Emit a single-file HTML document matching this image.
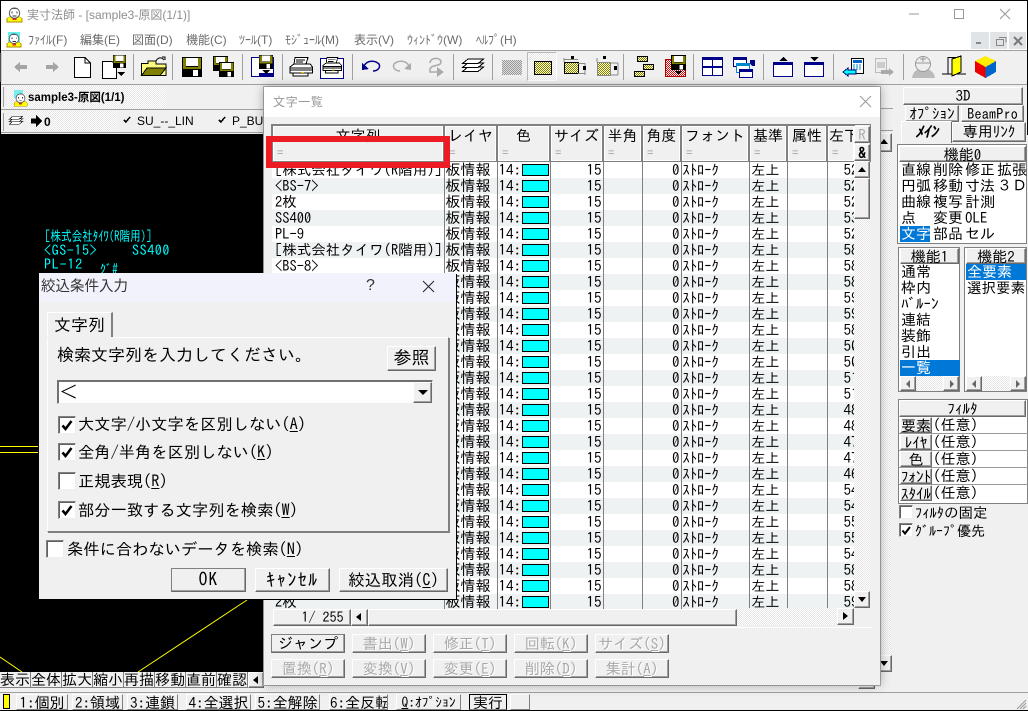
<!DOCTYPE html>
<html lang="ja"><head><meta charset="utf-8"><title>実寸法師</title>
<style>
html,body{margin:0;padding:0;background:#f0f0f0}
body{width:1028px;height:711px;position:relative;overflow:hidden;font-family:"IPAGothic","Noto Sans CJK JP",monospace;font-size:15px;color:#000}
div,span.a,svg{position:absolute}
.t{white-space:pre;line-height:16px;height:16px}
.u{font-family:"Liberation Sans","Noto Sans CJK JP",sans-serif}
.m{font-family:"Liberation Sans","Noto Sans CJK JP",sans-serif;font-size:12px;color:#6a6a6a;top:32px;height:16px;line-height:16px;white-space:pre}
.b{box-sizing:border-box;background:#f0f0f0;border:1px solid;border-color:#fff #6a6a6a #6a6a6a #fff;box-shadow:inset -1px -1px 0 #a0a0a0;text-align:center;white-space:pre}
.d{background:repeating-conic-gradient(#fff 0 25%,#e6e6e6 0 50%) 0 0/2px 2px}
.dis{color:#a8a8a8;text-shadow:1px 1px 0 #fff}
.h{box-sizing:border-box;background:#f0f0f0;border:1px solid #fff;box-shadow:0 0 0 1px #808080;text-align:center;white-space:pre;line-height:18px;height:35px;top:126px;overflow:hidden}
.h i{position:absolute;left:3px;top:20px;font:normal 11px/12px "Liberation Sans",sans-serif;color:#999}
table{position:absolute;left:272px;top:162px;border-collapse:collapse;table-layout:fixed;width:582px;background:#fff;font-size:15px}
td{height:16px;padding:0;line-height:16px;border-right:1px solid #808080;white-space:pre;overflow:hidden;box-sizing:border-box}
tr:nth-child(even){background:#eef2f2}
td:nth-child(1){padding-left:3px;font-size:14.5px}
td:nth-child(2){padding-left:1px}
td:nth-child(3){padding-left:1px}
td:nth-child(4),td:nth-child(6){text-align:right;padding-right:1px}
td:nth-child(7){font-size:14.5px;padding-left:1px}
td:nth-child(8){padding-left:2px;font-size:14px}
td:nth-child(10){padding-left:16px;border:0}
td b{display:inline-block;width:25px;height:10px;background:#0ff;border:1px solid #000;vertical-align:-1px;margin-left:1px}
.cb{box-sizing:border-box;width:18px;height:18px;background:#fff;border:1px solid;border-color:#808080 #eee #eee #808080;box-shadow:inset 1px 1px 0 #606060}
.tri{width:0;height:0}
.hl{background:#0078d7;color:#fff}
.sb{box-sizing:border-box;top:694px;height:16px;background:#f0f0f0;border:1px solid;border-color:#fff #808080 #808080 #fff;line-height:15px;text-align:center;font-size:15px;white-space:pre;overflow:hidden}
.k{box-sizing:border-box;top:672px;height:16px;width:31px;background:#f0f0f0;border-right:1px solid #808080;border-bottom:1px solid #808080;font-size:15px;line-height:15px;text-align:center;overflow:hidden}
.f{left:900px;width:32px;height:16px;font-size:15px;line-height:15px;overflow:hidden}
.cy{color:#0ff;transform-origin:0 0}
</style></head><body>

<!-- title bar -->
<div style="left:0;top:0;width:1028px;height:51px;background:#fff"></div>
<div class="t u" style="left:27px;top:7px;font-size:12px;color:#8e8e8e">実寸法師 - [sample3-原図(1/1)]</div>

<div class="m" style="left:28px">ﾌｧｲﾙ(F)</div>
<div class="m" style="left:80px">編集(E)</div>
<div class="m" style="left:132px">図面(D)</div>
<div class="m" style="left:186px">機能(C)</div>
<div class="m" style="left:239px">ﾂｰﾙ(T)</div>
<div class="m" style="left:285px">ﾓｼﾞｭｰﾙ(M)</div>
<div class="m" style="left:354px">表示(V)</div>
<div class="m" style="left:407px">ｳｨﾝﾄﾞｳ(W)</div>
<div class="m" style="left:476px">ﾍﾙﾌﾟ(H)</div>

<div style="left:971px;top:32px;width:18px;height:17px;background:#e1e4e7"></div>
<div style="left:990px;top:32px;width:17px;height:17px;background:#e1e4e7"></div>
<div style="left:1009px;top:32px;width:17px;height:17px;background:#e1e4e7"></div>

<!-- toolbar bg -->
<div style="left:0;top:50px;width:1028px;height:1px;background:#a0a0a0"></div>
<div style="left:0;top:84px;width:1028px;height:1px;background:#a0a0a0"></div>
<div style="left:527px;top:52px;width:30px;height:29px;box-sizing:border-box;border:1px solid #c8c8c8;border-color:#b8b8b8 #fff #fff #b8b8b8" class="d"></div>

<!-- tabs -->
<div style="left:0;top:85px;width:893px;height:25px;background:#f0f0f0"></div>
<div style="left:3px;top:87px;width:1px;height:20px;background:#a0a0a0"></div>
<div class="d" style="left:7px;top:86px;width:159px;height:23px"></div>
<div class="t u" style="left:28px;top:90px;font-size:11.500px;font-weight:bold">sample3-原図(1/1)</div>
<div style="left:0;top:109px;width:893px;height:1px;background:#a0a0a0"></div>
<div style="left:3px;top:113px;width:1px;height:18px;background:#a0a0a0"></div>
<div class="d" style="left:27px;top:111px;width:90px;height:20px"></div>
<div class="t u" style="left:44px;top:114px;font-size:12px;font-weight:bold">0</div>
<div class="t u" style="left:137px;top:113px;font-size:12px">SU_--_LIN</div>
<div class="t u" style="left:232px;top:113px;font-size:12px">P_BUZZ</div>
<div style="left:0;top:132px;width:893px;height:1px;background:#a0a0a0"></div>

<!-- canvas -->
<div style="left:0;top:134px;width:881px;height:538px;background:#000"></div>
<svg style="left:0;top:134px" width="265" height="540" shape-rendering="crispEdges">
<path d="M0 312.500H38M0 318.500H38" stroke="#ff0" fill="none"/>
<path d="M138 538L247 466M0 523L22 538" stroke="#ff0" fill="none" shape-rendering="auto"/>
</svg>
<div class="t cy" style="left:45px;top:228px;font-size:14px;transform:scaleX(.76)">[株式会社ﾀｲﾜ(R階用)]</div>
<div class="t cy" style="left:44px;top:242px;font-size:14px;letter-spacing:.6px">&lt;GS-15&gt;</div>
<div class="t cy" style="left:132px;top:242px;font-size:14px;letter-spacing:.6px">SS400</div>
<div class="t cy" style="left:44px;top:256px;font-size:14px;letter-spacing:.8px">PL-12</div>
<div class="t cy" style="left:100px;top:261px;font-size:12px">ｸﾞ#</div>

<!-- canvas scrollbar right -->
<div style="left:872px;top:85px;width:21px;height:607px;background:#f0f0f0"></div>
<div style="left:872px;top:108px;width:21px;height:1px;background:#a0a0a0"></div>
<div style="left:872px;top:130px;width:21px;height:1px;background:#a0a0a0"></div>
<div class="d" style="left:872px;top:152px;width:19px;height:520px"></div>
<div class="b" style="left:874px;top:133px;width:18px;height:19px"></div>
<div class="tri" style="left:880px;top:139px;border:4px solid transparent;border-top:0;border-bottom:5px solid #000"></div>
<div class="b" style="left:874px;top:655px;width:18px;height:17px"></div>
<div class="tri" style="left:880px;top:661px;border:4px solid transparent;border-bottom:0;border-top:5px solid #000"></div>
<div style="left:264px;top:672px;width:616px;height:17px" class="d"></div>
<div class="b" style="left:858px;top:672px;width:17px;height:17px"></div>

<!-- command strip -->
<div style="left:0;top:672px;width:265px;height:17px;background:#f0f0f0"></div>
<div class="k" style="left:0">表示</div><div class="k" style="left:31px">全体</div><div class="k" style="left:62px">拡大</div><div class="k" style="left:93px">縮小</div><div class="k" style="left:124px">再描</div><div class="k" style="left:155px">移動</div><div class="k" style="left:186px">直前</div><div class="k" style="left:217px">確認</div>
<div class="b" style="left:248px;top:672px;width:16px;height:16px"></div>
<div class="tri" style="left:253px;top:676px;border:4px solid transparent;border-left:0;border-right:5px solid #000"></div>

<!-- status -->
<div style="left:0;top:689px;width:1028px;height:22px;background:#f0f0f0"></div>
<div style="left:0;top:692px;width:1028px;height:1px;background:#a0a0a0"></div>
<div style="left:3px;top:694px;width:7px;height:15px;background:#ff0;border:1px solid #000;box-sizing:border-box"></div>
<div class="sb d" style="left:16px;width:52px"><u>1</u>:個別</div>
<div class="sb" style="left:72px;width:51px"><u>2</u>:領域</div>
<div class="sb" style="left:127px;width:51px"><u>3</u>:連鎖</div>
<div class="sb" style="left:186px;width:65px"><u>4</u>:全選択</div>
<div class="sb" style="left:255px;width:65px"><u>5</u>:全解除</div>
<div class="sb" style="left:329px;width:59px"><u>6</u>:全反転</div>
<div class="sb" style="left:396px;width:65px;font-size:13.500px"><u>Q</u>:ｵﾌﾟｼｮﾝ</div>
<div class="sb" style="left:469px;width:38px;border-color:#000 #000 #808080 #000">実行</div>
<div class="sb" style="left:510px;width:20px"></div>
<div style="left:0;top:710px;width:1028px;height:1px;background:#000"></div>

<!-- right panel -->
<div style="left:893px;top:85px;width:135px;height:607px;background:#f0f0f0"></div>
<div class="b" style="left:903px;top:87px;width:120px;height:18px;line-height:15px;font-size:15px">3D</div>
<div class="b" style="left:905px;top:105px;width:54px;height:17px;line-height:15px;font-size:15px">ｵﾌﾟｼｮﾝ</div>
<div class="b" style="left:961px;top:105px;width:63px;height:17px;line-height:15px;font-size:14.500px">BeamPro</div>
<div class="b" style="left:952px;top:122px;width:74px;height:20px;line-height:17px;font-size:15px">専用ﾘﾝｸ</div>
<div class="b" style="left:901px;top:121px;width:51px;height:22px;line-height:19px;font-size:15px;font-weight:bold;font-style:italic;border-bottom:0;box-shadow:none">ﾒｲﾝ</div>

<div style="left:898px;top:145px;width:128px;height:98px;background:#fff;box-shadow:0 0 0 1px #808080"></div>
<div class="b" style="left:899px;top:146px;width:127px;height:16px;line-height:15px;font-size:15px">機能0</div>
<div class="hl" style="left:900px;top:226px;width:30px;height:16px"></div>
<div class="t" style="left:901px;top:162px">直線</div><div class="t" style="left:933px;top:162px">削除</div><div class="t" style="left:965px;top:162px">修正</div><div class="t" style="left:997px;top:162px">拡張</div>
<div class="t" style="left:901px;top:178px">円弧</div><div class="t" style="left:933px;top:178px">移動</div><div class="t" style="left:965px;top:178px">寸法</div><div class="t" style="left:997px;top:178px">３Ｄ</div>
<div class="t" style="left:901px;top:194px">曲線</div><div class="t" style="left:933px;top:194px">複写</div><div class="t" style="left:965px;top:194px">計測</div>
<div class="t" style="left:901px;top:210px">点</div><div class="t" style="left:933px;top:210px">変更</div><div class="t" style="left:965px;top:210px">OLE</div>
<div class="t" style="left:901px;top:226px;color:#fff">文字</div><div class="t" style="left:933px;top:226px">部品</div><div class="t" style="left:965px;top:226px">セル</div>

<div style="left:899px;top:248px;width:60px;height:143px;background:#fff;box-shadow:0 0 0 1px #808080"></div>
<div class="b" style="left:900px;top:248px;width:59px;height:16px;line-height:15px;font-size:15px">機能1</div>
<div class="t" style="left:901px;top:264px">通常</div>
<div class="t" style="left:901px;top:280px">枠内</div>
<div class="t" style="left:901px;top:296px;font-size:15px">ﾊﾞﾙｰﾝ</div>
<div class="t" style="left:901px;top:312px">連結</div>
<div class="t" style="left:901px;top:328px">装飾</div>
<div class="t" style="left:901px;top:344px">引出</div>
<div class="hl" style="left:900px;top:360px;width:60px;height:16px"></div>
<div class="t" style="left:901px;top:360px;color:#fff">一覧</div>
<div class="d" style="left:900px;top:376px;width:59px;height:15px"></div>
<div class="b" style="left:900px;top:376px;width:16px;height:15px"></div>
<div class="b" style="left:943px;top:376px;width:16px;height:15px"></div>
<div class="tri" style="left:906px;top:380px;border:4px solid transparent;border-left:0;border-right:4px solid #666"></div>
<div class="tri" style="left:950px;top:380px;border:4px solid transparent;border-right:0;border-left:4px solid #666"></div>

<div style="left:965px;top:248px;width:61px;height:143px;background:#fff;box-shadow:0 0 0 1px #808080"></div>
<div class="b" style="left:966px;top:248px;width:60px;height:16px;line-height:15px;font-size:15px">機能2</div>
<div class="hl" style="left:966px;top:264px;width:60px;height:16px"></div>
<div class="t" style="left:967px;top:264px;color:#fff">全要素</div>
<div class="t" style="left:967px;top:280px;font-size:14.500px">選択要素</div>
<div class="d" style="left:966px;top:376px;width:60px;height:15px"></div>
<div class="b" style="left:966px;top:376px;width:16px;height:15px"></div>
<div class="b" style="left:1010px;top:376px;width:16px;height:15px"></div>
<div class="tri" style="left:972px;top:380px;border:4px solid transparent;border-left:0;border-right:4px solid #666"></div>
<div class="tri" style="left:1016px;top:380px;border:4px solid transparent;border-right:0;border-left:4px solid #666"></div>

<div style="left:899px;top:400px;width:128px;height:103px;background:#fff;box-shadow:0 0 0 1px #808080"></div>
<div class="b" style="left:899px;top:400px;width:127px;height:17px;line-height:15px;font-size:15px">ﾌｨﾙﾀ</div>
<div style="left:899px;top:433px;width:129px;height:1px;background:#999"></div>
<div style="left:899px;top:450px;width:129px;height:1px;background:#999"></div>
<div style="left:899px;top:467px;width:129px;height:1px;background:#999"></div>
<div style="left:899px;top:484px;width:129px;height:1px;background:#999"></div>
<div class="b f" style="top:417px">要素</div><div class="t" style="left:933px;top:417px">(任意)</div>
<div class="b f" style="top:434px">ﾚｲﾔ</div><div class="t" style="left:933px;top:434px">(任意)</div>
<div class="b f" style="top:451px">色</div><div class="t" style="left:933px;top:451px">(任意)</div>
<div class="b f" style="top:468px">ﾌｫﾝﾄ</div><div class="t" style="left:933px;top:468px">(任意)</div>
<div class="b f" style="top:485px">ｽﾀｲﾙ</div><div class="t" style="left:933px;top:485px">(任意)</div>
<div class="cb" style="left:899px;top:505px;width:14px;height:14px"></div>
<div class="t" style="left:915px;top:505px;font-size:14.500px">ﾌｨﾙﾀの固定</div>
<div class="cb" style="left:899px;top:523px;width:14px;height:14px"><svg style="left:1px;top:1px" width="11" height="11"><path d="M1.500 5.500l2.500 3 5-6.500" stroke="#000" stroke-width="2" fill="none"/></svg></div>
<div class="t" style="left:915px;top:523px;font-size:14px">ｸﾞﾙｰﾌﾟ優先</div>

<svg style="left:1016px;top:699px" width="11" height="11"><path d="M10 1L1 10M10 4L4 10M10 7L7 10" stroke="#999"/></svg>

<!-- list dialog -->
<div style="left:264px;top:87px;width:616px;height:598px;background:#f0f0f0;box-shadow:0 0 10px rgba(0,0,0,.35),0 0 0 1px #b0b0b0"></div>
<div style="left:264px;top:87px;width:616px;height:30px;background:#fff"></div>
<div class="t u" style="left:273px;top:94px;font-size:12px;color:#999;letter-spacing:.6px">文字一覧</div>
<svg style="left:859px;top:95px" width="13" height="13"><path d="M1 1L12 12M12 1L1 12" stroke="#999" fill="none"/></svg>

<div style="left:272px;top:125px;width:598px;height:36px;background:#f0f0f0;box-shadow:0 0 0 1px #808080"></div>
<div class="h" style="left:273px;width:170px">文字列<i>=</i></div>
<div class="h" style="left:445px;width:51px">レイヤ<i>=</i></div>
<div class="h" style="left:498px;width:51px">色<i>=</i></div>
<div class="h" style="left:551px;width:51px">サイズ<i>=</i></div>
<div class="h" style="left:604px;width:37px">半角<i>=</i></div>
<div class="h" style="left:643px;width:37px">角度<i>=</i></div>
<div class="h" style="left:682px;width:66px">フォント<i>=</i></div>
<div class="h" style="left:750px;width:36px">基準<i>=</i></div>
<div class="h" style="left:788px;width:38px">属性<i>=</i></div>
<div class="h" style="left:828px;width:26px;text-align:left">左下<i>=</i></div>

<table><colgroup><col style="width:172px"><col style="width:53px"><col style="width:53px"><col style="width:53px"><col style="width:39px"><col style="width:39px"><col style="width:68px"><col style="width:38px"><col style="width:40px"><col style="width:27px"></colgroup>
<tr><td>[株式会社タイワ(R階用)]<td>板情報<td>14:<b></b><td>15<td><td>0<td>ｽﾄﾛｰｸ<td>左上<td><td>5230
<tr><td>&lt;BS-7&gt;<td>板情報<td>14:<b></b><td>15<td><td>0<td>ｽﾄﾛｰｸ<td>左上<td><td>5230
<tr><td>2枚<td>板情報<td>14:<b></b><td>15<td><td>0<td>ｽﾄﾛｰｸ<td>左上<td><td>5260
<tr><td>SS400<td>板情報<td>14:<b></b><td>15<td><td>0<td>ｽﾄﾛｰｸ<td>左上<td><td>5330
<tr><td>PL-9<td>板情報<td>14:<b></b><td>15<td><td>0<td>ｽﾄﾛｰｸ<td>左上<td><td>5230
<tr><td>[株式会社タイワ(R階用)]<td>板情報<td>14:<b></b><td>15<td><td>0<td>ｽﾄﾛｰｸ<td>左上<td><td>5830
<tr><td>&lt;BS-8&gt;<td>板情報<td>14:<b></b><td>15<td><td>0<td>ｽﾄﾛｰｸ<td>左上<td><td>5830
<tr><td><td>板情報<td>14:<b></b><td>15<td><td>0<td>ｽﾄﾛｰｸ<td>左上<td><td>5830
<tr><td><td>板情報<td>14:<b></b><td>15<td><td>0<td>ｽﾄﾛｰｸ<td>左上<td><td>5930
<tr><td><td>板情報<td>14:<b></b><td>15<td><td>0<td>ｽﾄﾛｰｸ<td>左上<td><td>5930
<tr><td><td>板情報<td>14:<b></b><td>15<td><td>0<td>ｽﾄﾛｰｸ<td>左上<td><td>5830
<tr><td><td>板情報<td>14:<b></b><td>15<td><td>0<td>ｽﾄﾛｰｸ<td>左上<td><td>5030
<tr><td><td>板情報<td>14:<b></b><td>15<td><td>0<td>ｽﾄﾛｰｸ<td>左上<td><td>5030
<tr><td><td>板情報<td>14:<b></b><td>15<td><td>0<td>ｽﾄﾛｰｸ<td>左上<td><td>5130
<tr><td><td>板情報<td>14:<b></b><td>15<td><td>0<td>ｽﾄﾛｰｸ<td>左上<td><td>5130
<tr><td><td>板情報<td>14:<b></b><td>15<td><td>0<td>ｽﾄﾛｰｸ<td>左上<td><td>4830
<tr><td><td>板情報<td>14:<b></b><td>15<td><td>0<td>ｽﾄﾛｰｸ<td>左上<td><td>4830
<tr><td><td>板情報<td>14:<b></b><td>15<td><td>0<td>ｽﾄﾛｰｸ<td>左上<td><td>4730
<tr><td><td>板情報<td>14:<b></b><td>15<td><td>0<td>ｽﾄﾛｰｸ<td>左上<td><td>4730
<tr><td><td>板情報<td>14:<b></b><td>15<td><td>0<td>ｽﾄﾛｰｸ<td>左上<td><td>4630
<tr><td><td>板情報<td>14:<b></b><td>15<td><td>0<td>ｽﾄﾛｰｸ<td>左上<td><td>5430
<tr><td><td>板情報<td>14:<b></b><td>15<td><td>0<td>ｽﾄﾛｰｸ<td>左上<td><td>5430
<tr><td><td>板情報<td>14:<b></b><td>15<td><td>0<td>ｽﾄﾛｰｸ<td>左上<td><td>5530
<tr><td><td>板情報<td>14:<b></b><td>15<td><td>0<td>ｽﾄﾛｰｸ<td>左上<td><td>5530
<tr><td><td>板情報<td>14:<b></b><td>15<td><td>0<td>ｽﾄﾛｰｸ<td>左上<td><td>5430
<tr><td><td>板情報<td>14:<b></b><td>15<td><td>0<td>ｽﾄﾛｰｸ<td>左上<td><td>5830
<tr><td><td>板情報<td>14:<b></b><td>15<td><td>0<td>ｽﾄﾛｰｸ<td>左上<td><td>5830
<tr><td>2枚<td>板情報<td>14:<b></b><td>15<td><td>0<td>ｽﾄﾛｰｸ<td>左上<td><td>5930
</table>

<!-- grid scrollbars -->
<div class="d" style="left:854px;top:126px;width:16px;height:482px"></div>
<div class="b" style="left:854px;top:126px;width:16px;height:17px;color:#aaa;line-height:15px;font-size:15px">R</div>
<div class="b" style="left:854px;top:144px;width:16px;height:17px;line-height:15px;font-size:15px;font-weight:bold">&amp;</div>
<div class="b" style="left:854px;top:161px;width:16px;height:17px"></div>
<div class="tri" style="left:858px;top:167px;border:4px solid transparent;border-top:0;border-bottom:5px solid #000"></div>
<div class="b" style="left:854px;top:178px;width:16px;height:41px"></div>
<div class="b" style="left:854px;top:591px;width:16px;height:17px"></div>
<div class="tri" style="left:858px;top:597px;border:4px solid transparent;border-bottom:0;border-top:5px solid #000"></div>

<div style="left:272px;top:610px;width:600px;height:17px;background:#f0f0f0;box-shadow:0 1px 0 #fff"></div>
<div class="d" style="left:737px;top:608px;width:100px;height:17px"></div>
<div class="b" style="left:273px;top:609px;width:78px;height:17px;line-height:15px;font-size:14px">   1/ 255</div>
<div class="b" style="left:351px;top:609px;width:17px;height:17px"></div>
<div class="tri" style="left:356px;top:613px;border:4px solid transparent;border-left:0;border-right:5px solid #000"></div>
<div class="b" style="left:368px;top:609px;width:369px;height:17px"></div>
<div class="b" style="left:837px;top:608px;width:17px;height:17px"></div>
<div class="tri" style="left:843px;top:612px;border:4px solid transparent;border-right:0;border-left:5px solid #000"></div>

<div class="b" style="left:271px;top:634px;width:74px;height:19px;line-height:17px;border-color:#808080 #6a6a6a #6a6a6a #808080">ジャンプ</div>
<div class="b dis" style="left:352px;top:634px;width:74px;height:19px;line-height:17px">書出(<u>W</u>)</div>
<div class="b dis" style="left:433px;top:634px;width:74px;height:19px;line-height:17px">修正(<u>T</u>)</div>
<div class="b dis" style="left:514px;top:634px;width:74px;height:19px;line-height:17px">回転(<u>K</u>)</div>
<div class="b dis" style="left:595px;top:634px;width:74px;height:19px;line-height:17px">サイズ(<u>S</u>)</div>
<div class="b dis" style="left:271px;top:659px;width:74px;height:19px;line-height:17px">置換(<u>R</u>)</div>
<div class="b dis" style="left:352px;top:659px;width:74px;height:19px;line-height:17px">変換(<u>V</u>)</div>
<div class="b dis" style="left:433px;top:659px;width:74px;height:19px;line-height:17px">変更(<u>E</u>)</div>
<div class="b dis" style="left:514px;top:659px;width:74px;height:19px;line-height:17px">削除(<u>D</u>)</div>
<div class="b dis" style="left:595px;top:659px;width:74px;height:19px;line-height:17px">集計(<u>A</u>)</div>

<!-- red highlight -->
<div style="left:266px;top:136px;width:172px;height:20px;border:6px solid #ed1c24"></div>

<!-- filter dialog -->
<div style="left:39px;top:273px;width:417px;height:326px;background:#f0f0f0;box-shadow:1px 1px 0 #000"></div>
<div style="left:39px;top:273px;width:417px;height:29px;background:#f1f2fb"></div>
<div class="t u" style="left:41px;top:279px;font-size:14.500px;color:#333">絞込条件入力</div>
<div class="t u" style="left:366px;top:278px;font-size:16px;color:#333">?</div>
<svg style="left:422px;top:280px" width="13" height="13"><path d="M1 1L12 12M12 1L1 12" stroke="#222" fill="none"/></svg>
<div style="left:47px;top:312px;width:66px;height:26px;background:#f0f0f0;border-top:1px solid #fff;border-left:1px solid #fff;border-right:2px solid #808080;box-sizing:border-box"></div>
<div class="t" style="left:54px;top:317px;font-size:17px;line-height:17px">文字列</div>
<div style="left:47px;top:337px;width:400px;height:193px;border:1px solid;border-color:#fff #808080 #808080 #fff;box-shadow:1px 1px 0 #808080"></div>
<div style="left:47px;top:337px;width:66px;height:2px;background:#f0f0f0"></div>
<div class="t" style="left:57px;top:347px;font-size:17px;line-height:17px">検索文字列を入力してください。</div>
<div class="b" style="left:387px;top:346px;width:49px;height:25px;line-height:23px;font-size:18px">参照</div>
<div style="left:57px;top:380px;width:376px;height:24px;box-sizing:border-box;background:#fff;border:1px solid;border-color:#707070 #eee #eee #707070;box-shadow:inset 1px 1px 0 #707070"></div>
<div class="t" style="left:60px;top:384px;font-size:17px;line-height:17px">＜</div>
<div class="b" style="left:413px;top:382px;width:19px;height:21px"></div>
<div class="tri" style="left:418px;top:390px;border:5px solid transparent;border-bottom:0;border-top:5px solid #000"></div>
<div class="cb" style="left:58px;top:416px"><svg style="left:2px;top:2px" width="13" height="13"><path d="M1.500 6.500l3 3.500 6-8" stroke="#000" stroke-width="2.500" fill="none"/></svg></div>
<div class="t" style="left:78px;top:416px;font-size:16.300px">大文字/小文字を区別しない(<u>A</u>)</div>
<div class="cb" style="left:58px;top:443px"><svg style="left:2px;top:2px" width="13" height="13"><path d="M1.500 6.500l3 3.500 6-8" stroke="#000" stroke-width="2.500" fill="none"/></svg></div>
<div class="t" style="left:78px;top:444px;font-size:16.300px">全角/半角を区別しない(<u>K</u>)</div>
<div class="cb" style="left:58px;top:472px"></div>
<div class="t" style="left:78px;top:473px;font-size:16.300px">正規表現(<u>R</u>)</div>
<div class="cb" style="left:58px;top:501px"><svg style="left:2px;top:2px" width="13" height="13"><path d="M1.500 6.500l3 3.500 6-8" stroke="#000" stroke-width="2.500" fill="none"/></svg></div>
<div class="t" style="left:78px;top:502px;font-size:16.300px">部分一致する文字列を検索(<u>W</u>)</div>
<div class="cb" style="left:46px;top:540px"></div>
<div class="t" style="left:67px;top:541px;font-size:16.300px">条件に合わないデータを検索(<u>N</u>)</div>
<div class="b" style="left:171px;top:568px;width:75px;height:24px;line-height:22px;font-size:18px;letter-spacing:1px;border-color:#808080 #6a6a6a #6a6a6a #808080">OK</div>
<div class="b" style="left:255px;top:568px;width:75px;height:24px;line-height:22px;font-size:18px;letter-spacing:1.500px">ｷｬﾝｾﾙ</div>
<div class="b" style="left:339px;top:568px;width:109px;height:24px;line-height:22px;font-size:16.500px">絞込取消(<u>C</u>)</div>

<!-- icons -->
<svg style="left:0;top:0" width="1028" height="135" shape-rendering="crispEdges">
<defs>
<pattern id="ol" width="2" height="2" patternUnits="userSpaceOnUse"><rect width="2" height="2" fill="#ffffd0"/><rect width="1" height="1" fill="#808000"/><rect x="1" y="1" width="1" height="1" fill="#808000"/></pattern>
<pattern id="yl" width="2" height="2" patternUnits="userSpaceOnUse"><rect width="2" height="2" fill="#ff0"/><rect width="1" height="1" fill="#fff"/><rect x="1" y="1" width="1" height="1" fill="#fff"/></pattern>
<pattern id="gy" width="2" height="2" patternUnits="userSpaceOnUse"><rect width="2" height="2" fill="#ddd"/><rect width="1" height="1" fill="#999"/><rect x="1" y="1" width="1" height="1" fill="#999"/></pattern>
<pattern id="rd" width="2" height="2" patternUnits="userSpaceOnUse"><rect width="2" height="2" fill="#fff"/><rect width="1" height="1" fill="#e00"/><rect x="1" y="1" width="1" height="1" fill="#e00"/></pattern>
<symbol id="disk" viewBox="0 0 20 20" overflow="visible"><rect x=".5" y=".5" width="19" height="19" fill="#808000" stroke="#000"/><rect x="4" y="1" width="12" height="9" fill="#fff"/><rect x="4" y="9" width="12" height="1" fill="#000"/><rect x="1" y="12" width="18" height="7" fill="#000"/><rect x="11" y="13" width="5" height="6" fill="#fff"/></symbol>
<symbol id="face" viewBox="0 0 16 16" overflow="visible"><path d="M0 16V12L4 10H12L16 12V16z" fill="#ff0" stroke="#a80" stroke-width=".6"/><path d="M6 12h4v2H6z" fill="#e22"/><circle cx="8" cy="6.500" r="5.500" fill="#fff" stroke="#555" shape-rendering="auto"/><path d="M5 5h1v2H5zM10 5h1v2h-1zM6 9h4v1H6z" fill="#333"/><path d="M5 1h6v1H5z" fill="#555"/></symbol>
<symbol id="prt" viewBox="0 0 24 20" overflow="visible"><path d="M6 .5H19L17 7H5z" fill="#fff" stroke="#000"/><path d="M7 3h9M7 5h7" stroke="#000"/><path d="M5 7H21L23.500 10V16H1V10z" fill="#fff" stroke="#000"/><path d="M1 11H23M1 13H23" stroke="#000"/><path d="M4 16H19V19H4z" fill="#fff" stroke="#000"/><rect x="12" y="15" width="3" height="1" fill="#dc0"/></symbol>
<symbol id="lay" viewBox="0 0 22 20" overflow="visible"><path d="M.5 13.500L6 9H21.500L16 13.500z" fill="#fff" stroke="#000"/><path d="M.5 9.500L6 5H21.500L16 9.500z" fill="#fff" stroke="#000"/><path d="M.5 5.500L6 1H21.500L16 5.500z" fill="#fff" stroke="#000"/></symbol>
</defs>

<path d="M0 .5H1028M.5 0V711M1027.500 0V711" stroke="#000"/>

<use href="#face" x="7" y="7" width="15" height="15"/>
<rect x="8" y="32" width="12" height="14" fill="#6ee"/><use href="#face" x="7" y="33" width="14" height="14"/>
<rect x="14" y="90" width="9" height="8" fill="#7ee"/><use href="#face" x="14" y="93" width="13" height="13"/>

<!-- mdi glyphs -->
<path d="M976 42h5v2h-5z" fill="#888"/><path d="M996.500 39.500h7v6h-7zM999 37.500h7v5" fill="none" stroke="#888"/><path d="M1014 37L1022 45M1022 37L1014 45" stroke="#777" stroke-width="2" shape-rendering="auto"/>
<path d="M909 14H919" stroke="#999"/><rect x="954.500" y="9.500" width="9" height="9" fill="none" stroke="#999"/><path d="M1000 9L1010 19M1010 9L1000 19" stroke="#999" shape-rendering="auto"/>

<!-- separators -->
<path d="M1 53V82M133.500 54V80M172.500 54V80M242.500 54V80M282.500 54V80M352.500 54V80M453.500 54V80M492.500 54V80M623.500 54V80M693.500 54V80M763.500 54V80M833.500 54V80M903.500 54V80" stroke="#a0a0a0"/>

<path d="M14 67l6-5v3h7v4h-7v3z" fill="#a4a4a4"/><path d="M59 67l-6-5v3h-7v4h7v3z" fill="#a4a4a4"/>
<path d="M74.500 57.500H85L90.500 63V77.500H74.500z" fill="#fff" stroke="#000"/><path d="M85 57.500V63H90.500" fill="none" stroke="#000"/>
<path d="M102.500 61.500H112L116.500 65V78.500H102.500z" fill="#fff" stroke="#000"/>
<use href="#disk" x="113" y="55" width="13" height="13"/>
<path d="M117 72h8l-4 4z" fill="#000"/>

<path d="M141.500 75.500V63.500H148V61H156V64H166V75.500z" fill="url(#yl)" stroke="#000"/><path d="M141.500 75.500L147 68H166L160 75.500z" fill="#808000" stroke="#000"/><path d="M156 61C158 57 162 57 164 60M162 57h3v3" fill="none" stroke="#000" shape-rendering="auto"/>
<use href="#disk" x="182" y="57" width="20" height="20"/>
<use href="#disk" x="213" y="56" width="15" height="15"/><use href="#disk" x="219" y="62" width="15" height="15"/>
<rect x="251.500" y="57.500" width="22" height="19" fill="#fff" stroke="#008"/><use href="#disk" x="259" y="55" width="14" height="14"/><path d="M259 73h14v4h-14z" fill="#008"/><path d="M262 70h8l-4 4z" fill="#000"/>

<use href="#prt" x="289" y="57" width="24" height="20"/>
<rect x="320.500" y="58.500" width="23" height="20" fill="#fff" stroke="#008"/><use href="#prt" x="322" y="56" width="20" height="19"/>

<path d="M364 66C367 60 375 60 379 64C381 68 377 71 373 71" fill="none" stroke="#008" stroke-width="1.500" shape-rendering="auto"/><path d="M362 70V63L369 69z" fill="#008"/>
<path d="M409 66C406 60 398 60 394 64C392 68 396 71 400 71" fill="none" stroke="#aaa" stroke-width="1.500" shape-rendering="auto"/><path d="M411 70V63L404 69z" fill="#aaa"/>
<path d="M430 63C430 57 441 57 441 62C441 67 430 64 430 70V72H438" fill="none" stroke="#aaa" stroke-width="1.500" shape-rendering="auto"/><path d="M437 67L444 72L437 77z" fill="#aaa"/>
<use href="#lay" x="462" y="58" width="22" height="20"/>

<rect x="502" y="60" width="20" height="15" fill="url(#gy)"/>
<rect x="534.500" y="61.500" width="17" height="13" fill="url(#ol)" stroke="#000" stroke-width="1"/>
<rect x="564.500" y="62.500" width="14" height="11" fill="url(#ol)" stroke="#000"/><path d="M564 58V62M585 63V75M564 59.500H578M578 63.500h7M578 73.500h7" stroke="#888" fill="none"/><rect x="571" y="56" width="3" height="3" fill="#000"/><rect x="583" y="66" width="3" height="4" fill="#000"/>
<rect x="597.500" y="62.500" width="13" height="13" fill="url(#ol)" stroke="#888"/><path d="M597 58V62M618 63V75M610 63h8M610 75h8" stroke="#888" fill="none"/><rect x="603" y="56" width="3" height="3" fill="#000"/><rect x="614" y="66" width="3" height="4" fill="#000"/>
<rect x="637.500" y="56.500" width="10" height="5" fill="url(#ol)" stroke="#000"/><rect x="643.500" y="64.500" width="10" height="5" fill="url(#ol)" stroke="#000"/><rect x="634.500" y="71.500" width="10" height="5" fill="url(#ol)" stroke="#000"/>
<rect x="665.500" y="59.500" width="20" height="17" fill="url(#rd)" stroke="#a00"/><use href="#disk" x="671" y="55" width="15" height="15"/><path d="M675 71h7l-3.500 4z" fill="#000"/>

<g fill="none" stroke="#008"><rect x="702.500" y="57.500" width="20" height="18" fill="#fff"/><path d="M702 66.500H722M712.500 57V75"/></g><path d="M703 58h20v2h-20zM703 66h20v2h-20z" fill="#008"/>
<rect x="733.500" y="57.500" width="13" height="9" fill="#fff" stroke="#008"/><path d="M734 58h13v2h-13z" fill="#008"/><rect x="736.500" y="63.500" width="13" height="9" fill="#fff" stroke="#08c"/><path d="M737 64h13v2h-13z" fill="#08c"/><rect x="739.500" y="69.500" width="13" height="8" fill="#fff" stroke="#008"/><path d="M740 70h13v2h-13z" fill="#008"/><path d="M750 60h5v6h-3l-2-2z" fill="#008"/>
<rect x="773.500" y="62.500" width="19" height="14" fill="#fff" stroke="#008"/><path d="M774 63h19v2h-19z" fill="#008"/><path d="M779 61h9l-4.500-4z" fill="#000"/>
<rect x="804.500" y="62.500" width="19" height="14" fill="#fff" stroke="#008"/><path d="M805 63h19v2h-19z" fill="#008"/><path d="M810 57h9l-4.500 4z" fill="#000"/>

<rect x="851.500" y="58.500" width="12" height="15" fill="#fff" stroke="#000"/><path d="M853 60h9v3h-9z" fill="#06c"/><path d="M853 65h9M853 67h9M853 69h9" stroke="#08c" stroke-dasharray="2 1"/><path d="M843 72l5-4v2h8v4h-8v2z" fill="#0ff" stroke="#008"/>
<rect x="875.500" y="58.500" width="11" height="14" fill="#eee" stroke="#bbb"/><path d="M877 63h8M877 65h8M877 67h8" stroke="#aaa"/><path d="M894 72l-5-4v2h-8v4h8v2z" fill="#aaa"/>

<path d="M912 78C913 71 917 70 919 69H927C930 70 934 71 935 78z" fill="#bbb"/><circle cx="923" cy="64" r="7.500" fill="#eee" stroke="#999" shape-rendering="auto"/><path d="M915 63H931" stroke="#999"/><path d="M920 59h6M923 56v6" stroke="#999"/>
<path d="M942 74H966" stroke="#000"/><path d="M948 74V57.500H959" fill="none" stroke="#000"/><path d="M952 59L961 56V72L952 76z" fill="#ff0" stroke="#000"/>
<path d="M985.500 56L996 61V72L985.500 78L975 72V61z" fill="#06c"/><path d="M985.500 56L996 61L985.500 67L975 61z" fill="#fe0"/><path d="M975 61L985.500 67V78L975 72z" fill="#e00"/>

<!-- layer bar icons -->
<use href="#lay" x="9" y="114" width="14" height="16"/>
<path d="M31 118.500h5V115l6 6-6 6v-3.500h-5z" fill="#000"/>
<path d="M124 120l2 2 4-5" fill="none" stroke="#000" stroke-width="1.500"/>
<path d="M219 120l2 2 4-5" fill="none" stroke="#000" stroke-width="1.500"/>
</svg>
</body></html>
